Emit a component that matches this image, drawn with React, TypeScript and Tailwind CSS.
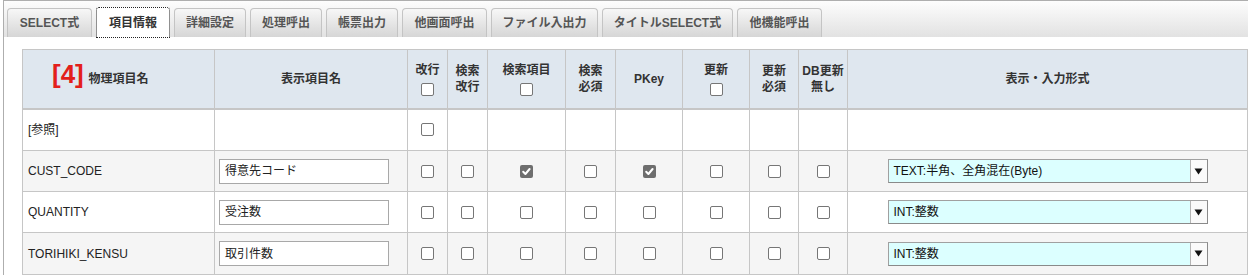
import React from "react";

const font = { fontFamily: '"Liberation Sans", Arial, "Noto Sans CJK JP", sans-serif' };

function Box({ checked = false }: { checked?: boolean }) {
  if (checked) {
    return (
      <span className="inline-flex w-[13px] h-[13px] rounded-[2px] bg-[#6e6e6e] items-center justify-center align-middle">
        <svg width="11" height="11" viewBox="0 0 11 11">
          <polyline points="2.2,5.8 4.4,8 8.6,3" fill="none" stroke="#fff" strokeWidth="2" strokeLinecap="round" strokeLinejoin="round" />
        </svg>
      </span>
    );
  }
  return <span className="inline-block w-[13px] h-[13px] rounded-[2px] border border-[#767676] bg-white align-middle" />;
}

function Tab({ label, w, active = false }: { label: string; w: string; active?: boolean }) {
  if (active) {
    return (
      <div className={`${w} h-[31px] -mb-px flex items-center justify-center bg-white border border-dotted border-[#222] rounded-t-[3px] text-[12px] font-bold text-[#333]`}>
        {label}
      </div>
    );
  }
  return (
    <div className={`${w} h-[29px] flex items-center justify-center bg-gradient-to-b from-[#f7f7f7] to-[#d6d6d6] border border-b-0 border-[#c4c4c4] rounded-t-[4px] text-[12px] font-bold text-[#555]`}>
      {label}
    </div>
  );
}

function TextBox({ value }: { value: string }) {
  return (
    <div className="w-[170px] h-[25px] border border-[#a8a8a8] bg-white flex items-center pl-[5px] text-[12px] text-[#222]">
      {value}
    </div>
  );
}

function SelectBox({ value }: { value: string }) {
  return (
    <div className="mx-auto w-[320px] h-[24px] flex border border-[#a0a0a0] border-r-[#8a8a8a] border-b-[#8a8a8a] bg-[#dcffff]">
      <div className="flex-1 flex items-center pl-[5px] text-[12px] text-[#111]">{value}</div>
      <div className="w-[17px] flex items-center justify-center bg-[#fafafa] border-l border-[#b5b5b5]">
        <svg width="9" height="7" viewBox="0 0 9 7">
          <polygon points="0.5,0.5 8.5,0.5 4.5,6.5" fill="#111" />
        </svg>
      </div>
    </div>
  );
}

const th = "border border-[#c6c6c6] text-[12px] font-bold text-[#333] align-middle text-center leading-[16px]";
const td = "border border-[#c6c6c6] text-[12px] text-[#222] align-middle";

type Row = {
  name: string;
  disp?: string;
  checks?: boolean[];
  fmt?: string;
  bg: string;
  h: string;
};

const rows: Row[] = [
  { name: "[参照]", bg: "bg-white", h: "h-[42px]" },
  {
    name: "CUST_CODE",
    disp: "得意先コード",
    checks: [false, false, true, false, true, false, false, false],
    fmt: "TEXT:半角、全角混在(Byte)",
    bg: "bg-[#f5f5f5]",
    h: "h-[41px]",
  },
  {
    name: "QUANTITY",
    disp: "受注数",
    checks: [false, false, false, false, false, false, false, false],
    fmt: "INT:整数",
    bg: "bg-white",
    h: "h-[41px]",
  },
  {
    name: "TORIHIKI_KENSU",
    disp: "取引件数",
    checks: [false, false, false, false, false, false, false, false],
    fmt: "INT:整数",
    bg: "bg-[#f5f5f5]",
    h: "h-[42px]",
  },
];

export default function App() {
  return (
    <div className="w-[1248px] h-[276px] overflow-hidden bg-white pl-[3px]" style={font}>
      <div className="w-[1300px] border-l border-t border-[#aeaeae] bg-white">
        <div className="h-[36px] flex items-end gap-[4px] pl-[3px] bg-gradient-to-b from-[#fdfdfd] to-[#e2e2e2]">
          <Tab label="SELECT式" w="w-[85px]" />
          <Tab label="項目情報" w="w-[74px]" active />
          <Tab label="詳細設定" w="w-[72px]" />
          <Tab label="処理呼出" w="w-[72px]" />
          <Tab label="帳票出力" w="w-[72px]" />
          <Tab label="他画面呼出" w="w-[85px]" />
          <Tab label="ファイル入出力" w="w-[107px]" />
          <Tab label="タイトルSELECT式" w="w-[131px]" />
          <Tab label="他機能呼出" w="w-[85px]" />
        </div>
        <div className="pl-[18px] pt-[12px]">
          <table className="table-fixed border-collapse w-[1225px]">
            <colgroup>
              <col className="w-[192px]" />
              <col className="w-[193px]" />
              <col className="w-[40px]" />
              <col className="w-[40px]" />
              <col className="w-[78px]" />
              <col className="w-[50px]" />
              <col className="w-[67px]" />
              <col className="w-[67px]" />
              <col className="w-[49px]" />
              <col className="w-[49px]" />
              <col className="w-[400px]" />
            </colgroup>
            <thead>
              <tr className="h-[59px] bg-[#dfe7ef] border-b-2 border-[#c6c6c6]">
                <th className={`${th} relative`}>
                  <span className="absolute left-[29px] top-[11px] text-[26px] leading-[26px] font-bold text-[#e3201b]">[4]</span>
                  物理項目名
                </th>
                <th className={th}>表示項目名</th>
                <th className={th}>
                  <div>改行</div>
                  <div className="mt-[5px] leading-[13px]"><Box /></div>
                </th>
                <th className={th}>
                  <div>検索</div>
                  <div>改行</div>
                </th>
                <th className={th}>
                  <div>検索項目</div>
                  <div className="mt-[5px] leading-[13px]"><Box /></div>
                </th>
                <th className={th}>
                  <div>検索</div>
                  <div>必須</div>
                </th>
                <th className={th}>PKey</th>
                <th className={th}>
                  <div>更新</div>
                  <div className="mt-[5px] leading-[13px]"><Box /></div>
                </th>
                <th className={th}>
                  <div>更新</div>
                  <div>必須</div>
                </th>
                <th className={th}>
                  <div>DB更新</div>
                  <div>無し</div>
                </th>
                <th className={th}>表示・入力形式</th>
              </tr>
            </thead>
            <tbody>
              {rows.map((r) => (
                <tr key={r.name} className={`${r.h} ${r.bg}`}>
                  <td className={`${td} pl-[5px]`}>{r.name}</td>
                  <td className={`${td} pl-[4px]`}>{r.disp ? <TextBox value={r.disp} /> : null}</td>
                  {r.checks
                    ? r.checks.map((c, i) => (
                        <td key={i} className={`${td} text-center leading-[13px]`}>
                          <Box checked={c} />
                        </td>
                      ))
                    : [0, 1, 2, 3, 4, 5, 6, 7].map((i) => (
                        <td key={i} className={`${td} text-center leading-[13px]`}>
                          {i === 0 ? <Box /> : null}
                        </td>
                      ))}
                  <td className={td}>{r.fmt ? <SelectBox value={r.fmt} /> : null}</td>
                </tr>
              ))}
            </tbody>
          </table>
        </div>
      </div>
    </div>
  );
}
